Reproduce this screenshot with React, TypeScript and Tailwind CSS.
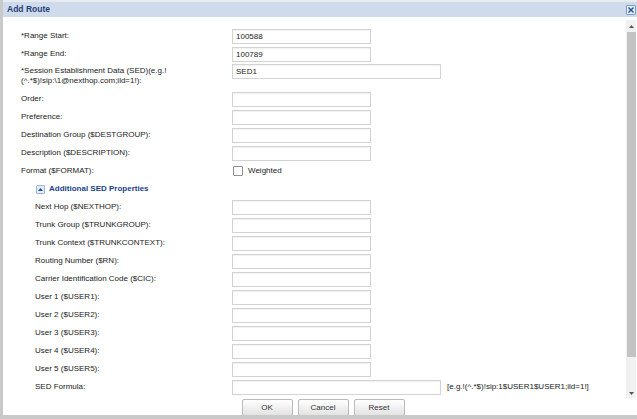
import React from "react";

const font = { fontFamily: '"Liberation Sans", Arial, sans-serif' };

type Row = { label: string; value?: string; wide?: boolean; sub?: boolean };

const MAIN: Row[] = [
  { label: "Order:" },
  { label: "Preference:" },
  { label: "Destination Group ($DESTGROUP):" },
  { label: "Description ($DESCRIPTION):" },
];

const SUB: Row[] = [
  { label: "Next Hop ($NEXTHOP):" },
  { label: "Trunk Group ($TRUNKGROUP):" },
  { label: "Trunk Context ($TRUNKCONTEXT):" },
  { label: "Routing Number ($RN):" },
  { label: "Carrier Identification Code ($CIC):" },
  { label: "User 1 ($USER1):" },
  { label: "User 2 ($USER2):" },
  { label: "User 3 ($USER3):" },
  { label: "User 4 ($USER4):" },
  { label: "User 5 ($USER5):" },
];

function Field({ value, wide }: { value?: string; wide?: boolean }) {
  return (
    <div
      className={[
        "h-[15px] border border-[#d3d3d3] bg-white shadow-[inset_0_1px_1px_rgba(0,0,0,0.06)] pl-[3px] text-[8px] leading-[13px] text-[#222]",
        wide ? "w-[209px]" : "w-[139px]",
      ].join(" ")}
    >
      {value}
    </div>
  );
}

function FormRow({ label, value, wide, sub }: Row) {
  return (
    <div className="flex items-center h-[18px]">
      <div className={["w-[229px] shrink-0", sub ? "pl-[32px]" : "pl-[18px]"].join(" ")}>
        {label}
      </div>
      <Field value={value} wide={wide} />
    </div>
  );
}

function Btn({ children }: { children: React.ReactNode }) {
  return (
    <button className="w-[51px] h-[17px] border border-[#b9b9b9] rounded-[2px] bg-gradient-to-b from-white to-[#e3e3e3] text-[8px] text-[#333] leading-none">
      {children}
    </button>
  );
}

export default function App() {
  return (
    <div
      className="w-[637px] h-[419px] flex flex-col bg-white border-l-[3px] border-b-4 border-[#c9c9c9] text-[8px] text-[#222] overflow-hidden"
      style={font}
    >
      {/* title bar */}
      <div className="h-[17px] shrink-0 border-t-2 border-[#e6ebf2] bg-[#cfdbea] flex items-center justify-between pl-[4px] pr-[1px]">
        <span className="text-[8.5px] font-bold text-[#1d3f78]">Add Route</span>
        <button className="w-[10px] h-[10px] border border-[#7e9cc4] bg-[#e3ebf5] flex items-center justify-center rounded-[1px]">
          <svg width="6" height="6" viewBox="0 0 6 6">
            <path d="M0.5 0.5L5.5 5.5M5.5 0.5L0.5 5.5" stroke="#1d4f9a" strokeWidth="1.4" />
          </svg>
        </button>
      </div>

      {/* scroll region */}
      <div className="h-[381px] shrink-0 flex">
        <div className="flex-1 pt-[10px]">
          <FormRow label="*Range Start:" value="100588" />
          <FormRow label="*Range End:" value="100789" />
          <div className="flex h-[27px] pt-[1px]">
            <div className="w-[229px] shrink-0 pl-[18px] leading-[10px] pt-[2px]">
              *Session Establishment Data (SED)(e.g.!
              <br />
              (^.*$)!sip:\1@nexthop.com;ild=1!):
            </div>
            <Field value="SED1" wide />
          </div>
          {MAIN.map((r) => (
            <FormRow key={r.label} {...r} />
          ))}
          <div className="flex items-center h-[18px]">
            <div className="w-[229px] shrink-0 pl-[18px]">Format ($FORMAT):</div>
            <div className="flex items-center gap-[5px] pl-[1px]">
              <span className="w-[10px] h-[10px] border border-[#8f8f8f] rounded-[1px] bg-white" />
              <span>Weighted</span>
            </div>
          </div>
          <div className="flex items-center h-[18px] pl-[33px] gap-[4px]">
            <span className="w-[9px] h-[9px] border border-[#9fb6d6] bg-[#e4ecf7] rounded-[1px] flex items-center justify-center">
              <svg width="5" height="3" viewBox="0 0 5 3">
                <path d="M0 3L2.5 0L5 3Z" fill="#1d4f9a" />
              </svg>
            </span>
            <span className="font-bold text-[#1d3f8a]">Additional SED Properties</span>
          </div>
          {SUB.map((r) => (
            <FormRow key={r.label} {...r} sub />
          ))}
          <div className="flex items-center h-[18px]">
            <div className="w-[229px] shrink-0 pl-[32px]">SED Formula:</div>
            <Field wide />
            <span className="ml-[6px]">[e.g.!(^.*$)!sip:1$USER1$USER1;ild=1!]</span>
          </div>
        </div>

        {/* scrollbar */}
        <div className="w-[10px] mr-[1px] mt-[3px] bg-[#f1f1f1] flex flex-col items-center">
          <div className="h-[12px] flex items-center justify-center">
            <svg width="5" height="3" viewBox="0 0 5 3">
              <path d="M0 3L2.5 0L5 3Z" fill="#555" />
            </svg>
          </div>
          <div className="w-[9px] h-[325px] bg-[#c3c3c3]" />
          <div className="flex-1 flex items-end pb-[3px]">
            <svg width="5" height="3" viewBox="0 0 5 3">
              <path d="M0 0L2.5 3L5 0Z" fill="#555" />
            </svg>
          </div>
        </div>
      </div>

      {/* buttons */}
      <div className="flex-1 flex items-start justify-center gap-[5px] pl-[6px] pt-[1px]">
        <Btn>OK</Btn>
        <Btn>Cancel</Btn>
        <Btn>Reset</Btn>
      </div>
    </div>
  );
}
